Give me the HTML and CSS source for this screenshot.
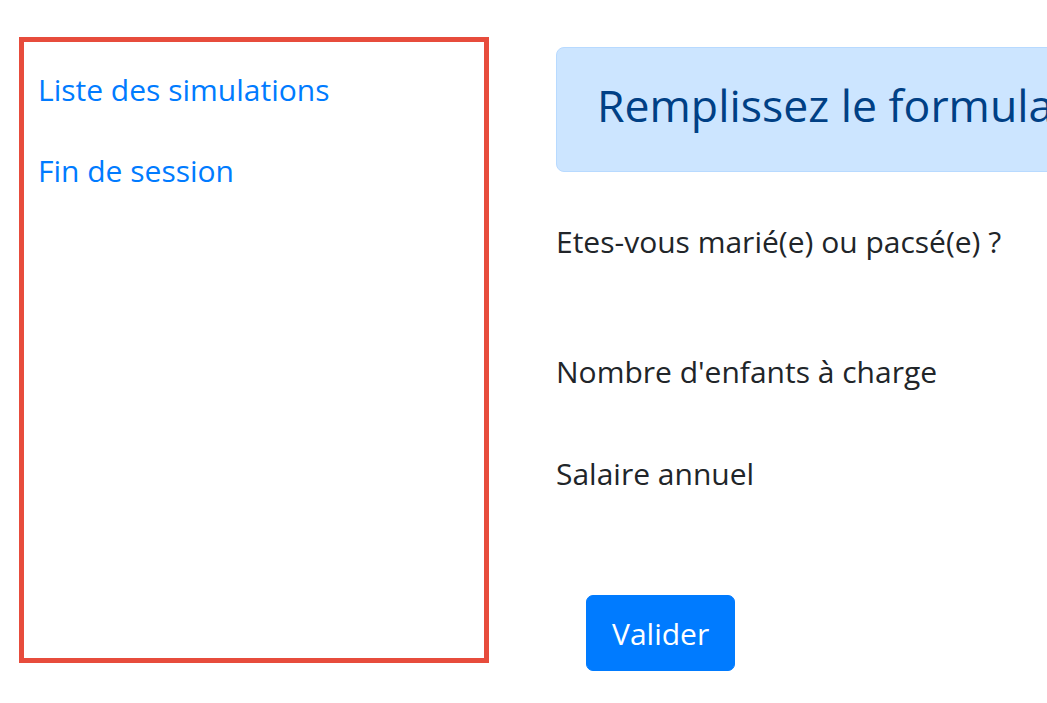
FILE: index.html
```html
<!DOCTYPE html>
<html lang="fr">
<head>
<meta charset="utf-8">
<title>Simulateur</title>
<link rel="stylesheet" href="styles.css">
</head>
<body>
<div class="page">
  <nav class="sidebar">
    <a class="nav-link" href="#">Liste des simulations</a>
    <a class="nav-link" href="#">Fin de session</a>
  </nav>
  <main class="content">
    <div class="alert">
      <h4 class="alert-title">Remplissez le formulaire ci-dessous puis validez-le</h4>
    </div>
    <form class="form">
      <div class="form-group fg-married">
        <label class="form-label">Etes-vous marié(e) ou pacsé(e) ?</label>
      </div>
      <div class="form-group fg-children">
        <label class="form-label">Nombre d'enfants à charge</label>
      </div>
      <div class="form-group fg-salary">
        <label class="form-label">Salaire annuel</label>
      </div>
      <div class="form-actions">
        <button type="button" class="btn">Valider</button>
      </div>
    </form>
  </main>
</div>
</body>
</html>
```

FILE: styles.css
```css
html {
  overflow: hidden;
}

body {
  margin: 0;
  font-family: "Open Sans", "Noto Sans", sans-serif;
  font-size: 30px;
  line-height: 48px;
  color: #212529;
  background: #ffffff;
}

.page {
  display: flex;
  align-items: flex-start;
  padding: 37px 0 0 19px;
}

.sidebar {
  flex: 0 0 auto;
  width: 470px;
  height: 626px;
  box-sizing: border-box;
  border: 5px solid #e74c3c;
  padding-top: 8px;
  display: flex;
  flex-direction: column;
}

.nav-link {
  display: block;
  padding: 16px 14px 17px;
  color: #007bff;
  text-decoration: none;
}

.content {
  flex: 0 0 auto;
  width: 820px;
  margin-left: 67px;
  margin-top: 10px;
}

.alert {
  background: #cce5ff;
  border: 1px solid #b8daff;
  border-radius: 8px;
  padding: 28px 40px 24px;
  color: #004085;
}

.alert-title {
  margin: 0 0 13px;
  font-size: 44.6px;
  font-weight: 400;
  line-height: 57.6px;
  white-space: nowrap;
}

.form {
  margin-top: 32px;
}

.form-group {
  box-sizing: border-box;
  padding-top: 14px;
}

.form-label {
  display: block;
}

.fg-married {
  height: 130px;
}

.fg-children {
  height: 102px;
}

.fg-salary {
  height: 100px;
}

.form-actions {
  margin-top: 59px;
  padding-left: 30px;
}

.btn {
  font-family: inherit;
  font-size: inherit;
  line-height: 48px;
  color: #ffffff;
  background: #007bff;
  border: 1px solid #007bff;
  border-radius: 7px;
  padding: 14px 25px 12px;
}
```
